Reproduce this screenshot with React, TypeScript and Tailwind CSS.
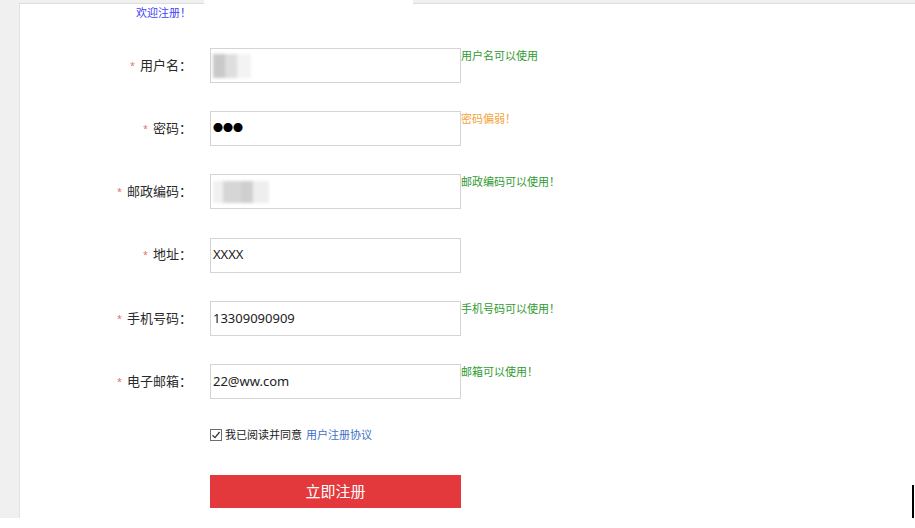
import React from 'react';

type Row = {
  label: string;
  value?: React.ReactNode;
  msg?: string;
  msgColor?: string;
};

const Blur: React.FC<{ wide?: boolean }> = ({ wide }) => (
  <div className="flex blur-[1.5px]">
    {wide ? (
      <>
        <div className="w-[10px] h-[22px] bg-[#f0f0f0]" />
        <div className="w-[18px] h-[22px] bg-[#d6d6d6]" />
        <div className="w-[12px] h-[22px] bg-[#cfcfcf]" />
        <div className="w-[16px] h-[22px] bg-[#eeeeee]" />
      </>
    ) : (
      <>
        <div className="w-[12px] h-[24px] bg-[#c9c9c9]" />
        <div className="w-[12px] h-[24px] bg-[#dedede]" />
        <div className="w-[14px] h-[24px] bg-[#f3f3f3]" />
      </>
    )}
  </div>
);

const rows: Row[] = [
  { label: '用户名', value: <Blur />, msg: '用户名可以使用', msgColor: 'text-[#2f9b2f]' },
  { label: '密码', value: <span className="text-[10px] tracking-[0px] text-black">●●●</span>, msg: '密码偏弱！', msgColor: 'text-[#f5a33a]' },
  { label: '邮政编码', value: <Blur wide />, msg: '邮政编码可以使用！', msgColor: 'text-[#2f9b2f]' },
  { label: '地址', value: 'XXXX' },
  { label: '手机号码', value: '13309090909', msg: '手机号码可以使用！', msgColor: 'text-[#2f9b2f]' },
  { label: '电子邮箱', value: '22@ww.com', msg: '邮箱可以使用！', msgColor: 'text-[#2f9b2f]' },
];

const App: React.FC = () => {
  return (
    <div
      className="w-[915px] h-[528px] bg-[#f0f0f0] overflow-hidden relative"
      style={{ fontFamily: '"Noto Sans", "Noto Sans CJK SC", sans-serif' }}
    >
      {/* tab strip */}
      <div className="flex h-[4px]">
        <div className="w-[19px]" />
        <div className="w-[185px] border-b border-[#dddddd]" />
        <div className="w-[209px] bg-white" />
        <div className="flex-1 border-b border-[#dddddd]" />
      </div>

      <div className="flex h-[514px]">
        <div className="w-[19px]" />
        <div className="flex-1 bg-white border-l border-[#e2e2e2]">
          <div className="pl-[116px] pt-[2px] text-[11px] leading-[14px] text-[#4343f5]">欢迎注册！</div>

          <div className="flex flex-col gap-[28.2px] mt-[28px]">
            {rows.map((r) => (
              <div key={r.label} className="flex items-start">
                <div className="w-[172px] h-[35px] flex items-center justify-end text-[13px] text-[#2a2a2a]">
                  <span className="text-[#e86a6a] text-[9px] mr-[5px]">*</span>
                  {r.label}：
                </div>
                <div className="ml-[18px] w-[251px] h-[35px] border border-[#d4d4d4] flex items-center pl-[2px] text-[13px] text-[#222222]">
                  {r.value}
                </div>
                {r.msg && (
                  <div className={`text-[11px] leading-[14px] pt-[1px] ${r.msgColor}`}>{r.msg}</div>
                )}
              </div>
            ))}
          </div>

          <div className="flex items-center ml-[190px] mt-[29px] text-[11px] leading-[14px]">
            <span className="w-[12px] h-[12px] border border-[#6e6e6e] bg-white flex items-center justify-center mr-[3px]">
              <svg width="10" height="10" viewBox="0 0 10 10">
                <path d="M1.5 5.2 L4 7.6 L8.6 2" fill="none" stroke="#333" strokeWidth="1.3" />
              </svg>
            </span>
            <span className="text-[#222222]">我已阅读并同意</span>
            <span className="text-[#3d6fc9] ml-[4px]">用户注册协议</span>
          </div>

          <button className="ml-[190px] mt-[33px] w-[251px] h-[33px] bg-[#e4393c] text-white text-[15px] flex items-center justify-center">
            立即注册
          </button>
        </div>
      </div>
      <div className="h-[10px] bg-white" />
      <div className="absolute left-[912px] top-[485px] w-[2px] h-[33px] bg-black" />
    </div>
  );
};

export default App;
